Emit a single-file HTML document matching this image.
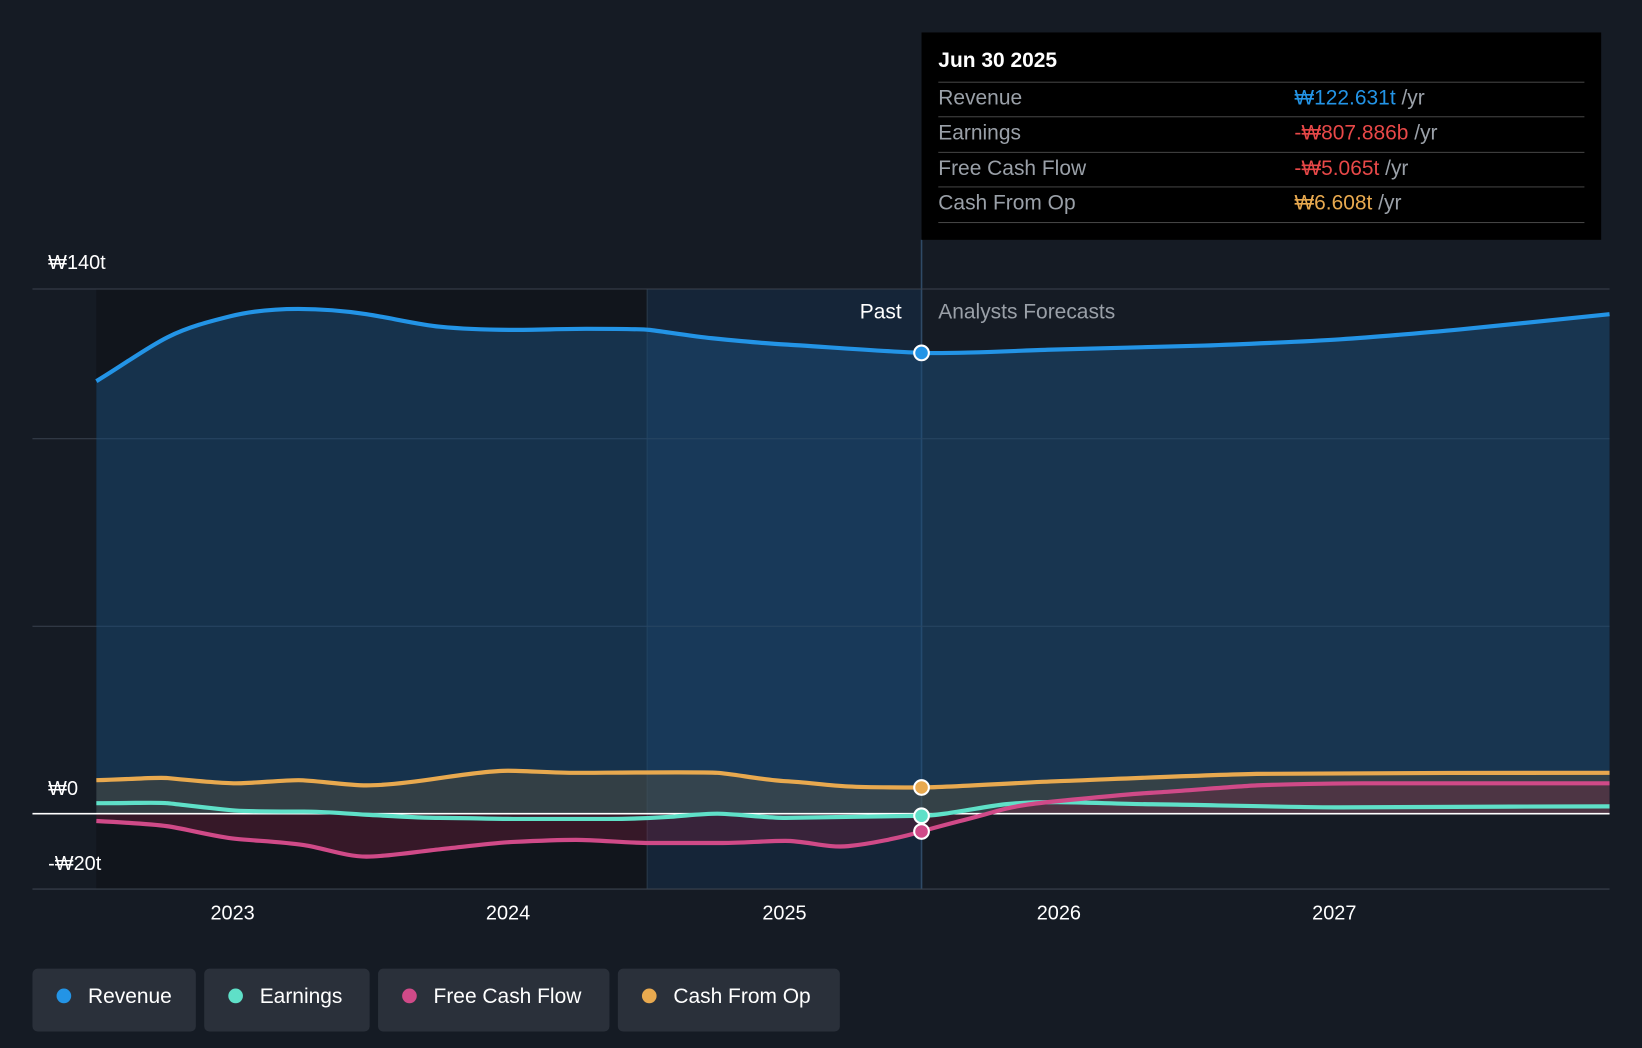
<!DOCTYPE html>
<html><head><meta charset="utf-8"><style>
html,body{margin:0;padding:0;background:#151b24;overflow:hidden;width:1642px;height:1048px}
#w{width:1568px;height:1001px;transform:scale(1.0472);transform-origin:0 0;position:relative;font-family:"Liberation Sans","Noto Sans CJK KR",sans-serif}
.lbl{position:absolute;color:#fff;font-size:19px}
.tt{position:absolute;left:880px;top:31px;width:649px;height:198px;background:#000}
.row{position:absolute;left:16px;right:16px;height:33px;border-top:1px solid #444;font-size:20px;color:#9aa0a8;line-height:30px}
.row span{position:absolute;left:340px}
.leg{position:absolute;top:925px;height:60px;background:#2a303a;border-radius:5px;color:#fff;font-size:20px;line-height:54px;box-sizing:border-box;padding-left:53px}
.leg i{position:absolute;left:23px;top:19px;width:14px;height:14px;border-radius:50%}
</style></head><body><div id="w">
<svg width="1568" height="1001" style="position:absolute;left:0;top:0">
<rect x="92" y="276" width="526" height="573" fill="#11151c"/>
<rect x="618" y="276" width="262" height="573" fill="#152538"/>
<line x1="880" y1="229" x2="880" y2="849" stroke="#2f4a66" stroke-width="1.5"/>
<line x1="618" y1="276" x2="618" y2="849" stroke="#2a3a4a"/>
<g stroke="#3a424e" stroke-width="1"><line x1="31" y1="276" x2="1537" y2="276"/><line x1="31" y1="419" x2="1537" y2="419"/><line x1="31" y1="598" x2="1537" y2="598"/><line x1="31" y1="849" x2="1537" y2="849"/></g>
<path d="M92,364 C120,347 140,332 160,322 S200,307 220,302 S260,295 285,295 S330,297 350,300 S400,310 420,312 S470,315 490,315 S540,314 560,314 S610,314 620,315 S660,321 680,323 S730,328 750,329 S850,336 880,337 S970,335 1000,334 S1120,331 1150,330 S1250,326 1280,324 S1370,317 1400,314 S1500,304 1537,300 L1537,777 L92,777Z" fill="#1c4a74" fill-opacity="0.55"/>
<path d="M92,364 C120,347 140,332 160,322 S200,307 220,302 S260,295 285,295 S330,297 350,300 S400,310 420,312 S470,315 490,315 S540,314 560,314 S610,314 620,315 S660,321 680,323 S730,328 750,329 S850,336 880,337 S970,335 1000,334 S1120,331 1150,330 S1250,326 1280,324 S1370,317 1400,314 S1500,304 1537,300" fill="none" stroke="#2394e6" stroke-width="4"/>
<path d="M92,745 L160,743 L225,748 L285,745 L350,750 L420,743 L485,736 L550,738 L685,738 L750,746 L810,751 L880,752 L1010,746 L1200,739 L1537,738 L1537,777 L92,777Z" fill="#6a5a3a" fill-opacity="0.35"/>
<path d="M92,784 L160,789 L225,801 L290,807 L350,818 L420,811 L490,804 L550,802 L620,805 L690,805 L750,803 L810,808 L880,794 L950,775 L1010,765 L1100,757 L1200,750 L1300,748 L1537,748 L1537,777 L92,777Z" fill="#7a2040" fill-opacity="0.35"/>
<line x1="31" y1="777" x2="1537" y2="777" stroke="#fff" stroke-width="1.5"/>
<g fill="none" stroke-width="4" stroke-linejoin="round">
<path d="M92,745 C130,744 150,742 160,743 S210,748 225,748 S270,745 285,745 S330,750 350,750 S400,746 420,743 S470,736 485,736 S530,738 550,738 S670,737 685,738 S730,745 750,746 S790,750 810,751 S860,752 880,752 S980,747 1010,746 S1150,740 1200,739 S1450,738 1537,738" stroke="#e8a94f"/>
<path d="M92,767 C130,767 150,766 160,767 S210,773 225,774 S270,775 290,775 S330,777 350,778 S400,781 420,781 S470,782 490,782 S560,782 580,782 S625,781 640,780 S670,777 685,777 S730,781 750,781 S860,779 880,779 S940,770 960,768 S990,766 1010,766 S1080,768 1100,768 S1240,771 1280,771 S1450,770 1537,770" stroke="#5fe0c8"/>
<path d="M92,784 C130,786 145,787 160,789 S205,799 225,801 S270,804 290,807 S330,818 350,818 S400,813 420,811 S470,805 490,804 S530,802 550,802 S600,805 620,805 S670,805 690,805 S730,803 750,803 S790,810 810,808 S860,800 880,794 S930,781 950,775 S990,767 1010,765 S1080,758 1100,757 S1180,751 1200,750 S1280,748 1300,748 S1450,748 1537,748" stroke="#d04a88"/>
</g>
<g stroke="#fff" stroke-width="2"><circle cx="880" cy="337" r="7" fill="#2394e6"/><circle cx="880" cy="752" r="7" fill="#e8a94f"/><circle cx="880" cy="779" r="7" fill="#5fe0c8"/><circle cx="880" cy="794" r="7" fill="#d04a88"/></g>
</svg>
<div class="lbl" style="left:46px;top:241px">₩140t</div>
<div class="lbl" style="left:46px;top:743px">₩0</div>
<div class="lbl" style="left:46px;top:815px">-₩20t</div>
<div class="lbl" style="left:821px;top:287px;font-size:20px">Past</div>
<div class="lbl" style="left:896px;top:287px;color:#9aa0a8;font-size:20px">Analysts Forecasts</div>
<div class="lbl" style="left:201px;top:862px">2023</div>
<div class="lbl" style="left:464px;top:862px">2024</div>
<div class="lbl" style="left:728px;top:862px">2025</div>
<div class="lbl" style="left:990px;top:862px">2026</div>
<div class="lbl" style="left:1253px;top:862px">2027</div>
<div class="tt">
<div style="position:absolute;left:16px;top:16px;color:#fff;font-size:20px;font-weight:bold">Jun 30 2025</div>
<div class="row" style="top:47px">Revenue<span><b style="color:#2394e6;font-weight:normal">₩122.631t</b> /yr</span></div>
<div class="row" style="top:80px">Earnings<span><b style="color:#e84848;font-weight:normal">-₩807.886b</b> /yr</span></div>
<div class="row" style="top:114px">Free Cash Flow<span><b style="color:#e84848;font-weight:normal">-₩5.065t</b> /yr</span></div>
<div class="row" style="top:147px;border-bottom:1px solid #444">Cash From Op<span><b style="color:#e8a94f;font-weight:normal">₩6.608t</b> /yr</span></div>
</div>
<div class="leg" style="left:31px;width:156px"><i style="background:#2394e6"></i>Revenue</div>
<div class="leg" style="left:195px;width:158px"><i style="background:#5fe0c8"></i>Earnings</div>
<div class="leg" style="left:361px;width:221px"><i style="background:#d04a88"></i>Free Cash Flow</div>
<div class="leg" style="left:590px;width:212px"><i style="background:#e8a94f"></i>Cash From Op</div>
</div></body></html>
